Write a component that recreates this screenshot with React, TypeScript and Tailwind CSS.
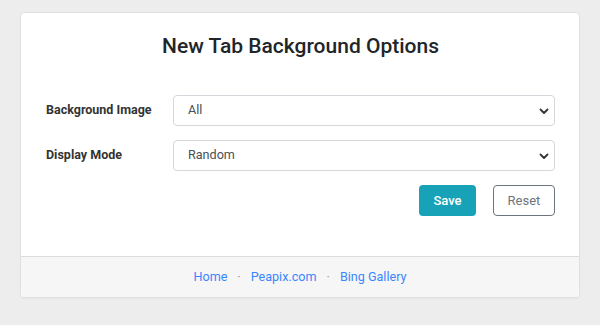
import React from "react";

function Chevron() {
  return (
    <svg
      className="pointer-events-none absolute right-[6px] top-1/2 -translate-y-1/2"
      width="10"
      height="10"
      viewBox="0 0 10 10"
      fill="none"
    >
      <path d="M1.5 3.5 L5 7 L8.5 3.5" stroke="#333" strokeWidth="1.8" strokeLinecap="round" strokeLinejoin="round" />
    </svg>
  );
}

function Select({ value, options }: { value: string; options: string[] }) {
  return (
    <div className="relative">
      <select
        defaultValue={value}
        className="block h-[31px] w-full appearance-none rounded-[4px] border border-[#d4d7db] bg-white pl-[14px] pr-6 text-[12.6px] text-[#495057] outline-none"
      >
        {options.map((o) => (
          <option key={o}>{o}</option>
        ))}
      </select>
      <Chevron />
    </div>
  );
}

export default function App() {
  return (
    <div
      className="min-h-[325px] w-full bg-[#ededed] px-5 pt-3"
      style={{ fontFamily: "Roboto, 'Liberation Sans', sans-serif" }}
    >
      <div className="overflow-hidden rounded-[4px] border border-[#e1e1e1] bg-white shadow-[0_1px_2px_rgba(0,0,0,0.04)]">
        <div className="pb-[40px] pl-[25px] pr-[24px] pt-[21px]">
          <h1 className="text-center text-[21px] font-medium leading-[24px] text-[#212529]">
            New Tab Background Options
          </h1>
          <div className="mt-[37px] grid grid-cols-[127px_1fr] items-center gap-y-[14px]">
            <label className="text-[12.5px] font-bold text-[#333]">Background Image</label>
            <Select value="All" options={["All"]} />
            <label className="text-[12.5px] font-bold text-[#333]">Display Mode</label>
            <Select value="Random" options={["Random"]} />
          </div>
          <div className="mt-[14px] flex justify-end gap-[17px]">
            <button className="h-[31px] w-[57px] rounded-[4px] bg-[#17a2b8] text-[13px] font-medium text-white">
              Save
            </button>
            <button className="h-[31px] w-[62px] rounded-[4px] border border-[#6c757d] bg-white text-[13px] text-[#6c757d]">
              Reset
            </button>
          </div>
        </div>
        <div className="flex h-[41px] items-center justify-center border-t border-[#dcdcdc] bg-[#f6f6f6] text-[12.6px]">
          <a className="text-[#3a86ff]">Home</a>
          <span className="mx-[10px] text-[#999]">·</span>
          <a className="text-[#3a86ff]">Peapix.com</a>
          <span className="mx-[10px] text-[#999]">·</span>
          <a className="text-[#3a86ff]">Bing Gallery</a>
        </div>
      </div>
    </div>
  );
}
